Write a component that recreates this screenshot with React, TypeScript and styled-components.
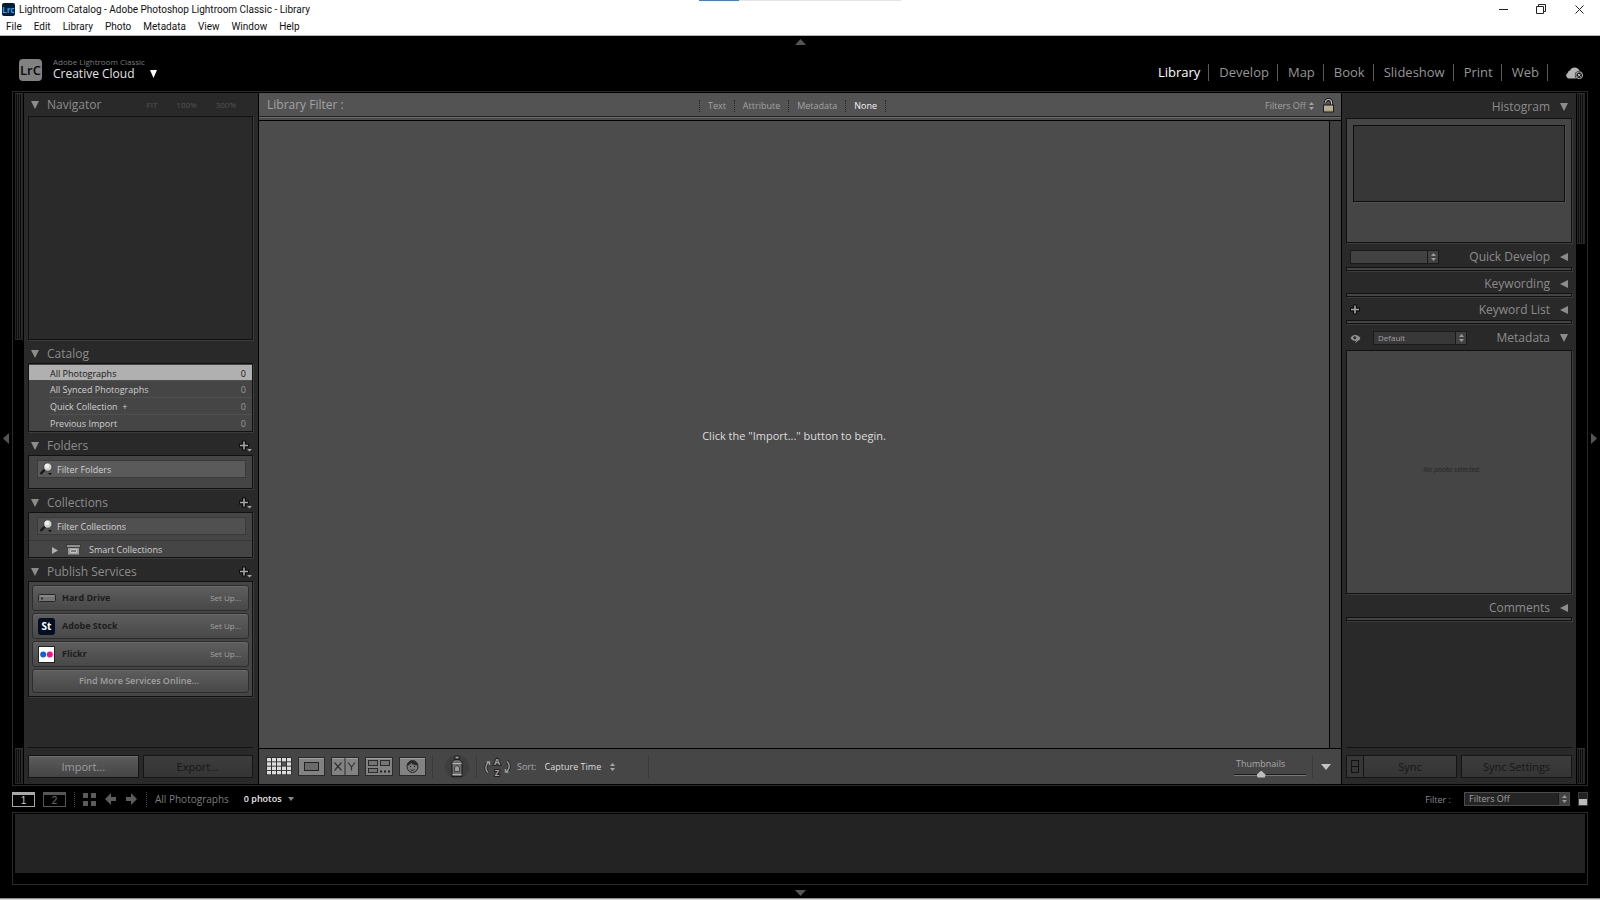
import React from 'react';
import styled, { createGlobalStyle, css } from 'styled-components';

const Global = createGlobalStyle`
  *, *::before, *::after { box-sizing: border-box; }
  body { margin: 0; background: #000; }
  body, button, input, select {
    font-family: "Open Sans", "Noto Sans", sans-serif;
    font-size: 9px;
  }
  button, input, select { margin: 0; padding: 0; border: 0; border-radius: 0; background: none; color: inherit; outline: none; }
  button { cursor: default; }
  svg { display: block; flex: none; }
  h1, h2, p { margin: 0; font-weight: 400; }
`;

const Shell = styled.div`
  display: flex;
  flex-direction: column;
  min-height: 100vh;
  background: #000;
`;

/* ---------- window chrome ---------- */

const Chrome = styled.header`
  position: relative;
  display: flex;
  flex-direction: column;
  height: 36px;
  background: #fff;
  color: #111;
  border-bottom: 1px solid #b4b4b4;
`;

const LoadBar = styled.div`
  position: absolute;
  top: 0;
  left: 50%;
  width: 202px;
  height: 1px;
  transform: translateX(-50%);
  background: linear-gradient(to right, #2b8ae0 40px, #e4e4e4 40px);
`;

const TitleRow = styled.div`
  display: flex;
  align-items: center;
  height: 18px;
  padding-left: 2px;
`;

const AppTitle = styled.h1`
  flex: 1;
  padding: 2px 0 0 4px;
  font-family: Roboto, sans-serif;
  font-size: 10px;
  line-height: 16px;
`;

const WindowButton = styled.button`
  display: grid;
  place-items: center;
  width: 38px;
  height: 18px;
`;

const WindowButtons = styled.div`
  display: flex;
  padding-right: 2px;
`;

const MenuBar = styled.nav`
  display: flex;
  gap: 12px;
  padding-left: 6px;
`;

const MenuItem = styled.button`
  font-family: Roboto, sans-serif;
  font-size: 10px;
  line-height: 18px;
`;

/* ---------- top strip ---------- */

const EdgeToggle = styled.button<{ $h?: number }>`
  display: grid;
  place-items: center;
  width: 100%;
  height: ${p => (p.$h ? p.$h + 'px' : '100%')};
  color: #555;
`;

const StripToggle = styled(EdgeToggle)`
  padding-top: 3px;
`;

const ModuleBar = styled.div`
  display: flex;
  justify-content: space-between;
  align-items: center;
  height: 43px;
  padding: 0 16px 0 19px;
`;

const Identity = styled.div`
  display: flex;
  align-items: center;
  gap: 10px;
  padding-top: 2px;
`;

const IdentityText = styled.div`
  display: flex;
  flex-direction: column;
  padding-bottom: 4px;
  color: #7a7a7a;
  font-size: 8px;
  line-height: 10px;
`;

const IdentityName = styled.button`
  display: flex;
  align-items: center;
  gap: 15px;
  color: #e4e4e4;
  font-size: 12px;
  line-height: 14px;
`;

const Modules = styled.nav`
  display: flex;
  align-items: center;
  padding-top: 6px;
`;

const Module = styled.a<{ $on?: boolean }>`
  padding: 0 8px 0 10px;
  border-right: 1px solid #5a5a5a;
  color: ${p => (p.$on ? '#fff' : '#969696')};
  font-size: 13px;
  line-height: 17px;
  text-decoration: none;
`;

const CloudButton = styled.button`
  padding-left: 17px;
`;

/* ---------- workspace ---------- */

const Workspace = styled.div`
  flex: 1;
  display: grid;
  grid-template-columns: 12px minmax(0, 1fr) 12px;
`;

const Frame = styled.div`
  display: grid;
  grid-template-columns: 10px 234px minmax(0, 1fr) 234px 10px;
  padding: 1px;
  border: 1px solid #292929;
`;

const ScrollTrack = styled.div`
  display: flex;
  flex-direction: column;
  justify-content: space-between;
  padding: 0 1px;
`;

const ScrollThumb = styled.div<{ $h: number }>`
  height: ${p => p.$h}px;
  border: 1px solid #262626;
  border-top-color: #333;
  background: repeating-linear-gradient(to right, #0c0c0c 0 1px, #2a2a2a 1px 2px);
`;

const Panel = styled.aside<{ $side: 'left' | 'right' }>`
  display: flex;
  flex-direction: column;
  padding: 0 ${p => (p.$side === 'left' ? 5 : 4)}px 0 4px;
  background: #292929;
  color: #8c8c8c;
`;

const PanelHead = styled.div<{ $h?: number; $right?: boolean; $top?: number }>`
  display: flex;
  align-items: center;
  flex-direction: ${p => (p.$right ? 'row-reverse' : 'row')};
  height: ${p => p.$h ?? 23}px;
  padding: ${p => p.$top ?? (p.$right ? 2 : 4)}px ${p => (p.$right ? 4 : 1)}px 0 ${p => (p.$right ? 4 : 3)}px;
`;

const PanelToggle = styled.button<{ $right?: boolean }>`
  display: flex;
  align-items: center;
  flex-direction: ${p => (p.$right ? 'row-reverse' : 'row')};
  gap: ${p => (p.$right ? 10 : 8)}px;
  color: #8c8c8c;
  font-size: 12px;
  line-height: 16px;
`;

const Spring = styled.span`
  flex: 1;
`;

const ZoomLevels = styled.div`
  display: flex;
  gap: 19px;
  margin-left: auto;
  padding-right: 16px;
  color: #545454;
`;

const ZoomLevel = styled.button`
  font-size: 8px;
  line-height: 12px;
`;

const Well = styled.div<{ $tone?: string }>`
  border: 1px solid #111;
  box-shadow: 1px 1px 0 #3c3c3c;
  background: ${p => p.$tone ?? '#454545'};
`;

const Preview = styled(Well)`
  height: 224px;
`;

const CatalogList = styled(Well)`
  padding-top: 1px;
`;

const CatalogRow = styled.button<{ $on?: boolean }>`
  display: flex;
  justify-content: space-between;
  align-items: center;
  width: 100%;
  height: 17px;
  padding: 2px 6px 0 21px;
  color: #cfcfcf;
  line-height: 15px;
  white-space: pre;
  background: linear-gradient(#505050, #505050) 20px 0 / 100% 1px no-repeat;
  ${p => p.$on && css`
    height: 15px;
    color: #161616;
    background: #b0b0b0;
  `}
`;

const Count = styled.span<{ $on?: boolean }>`
  color: ${p => (p.$on ? '#161616' : '#999')};
`;

const SearchWell = styled(Well)<{ $pad: number }>`
  padding: 4px 0 ${p => p.$pad}px;
`;

const SearchField = styled.label<{ $tone: string }>`
  display: flex;
  align-items: center;
  gap: 4px;
  height: 18px;
  margin: 0 6px 0 8px;
  padding-left: 1px;
  border: 1px solid #3a3a3a;
  background: ${p => p.$tone};
`;

const SearchInput = styled.input`
  flex: 1;
  min-width: 0;
  padding-top: 2px;
  line-height: 14px;
  color: #d0d0d0;
  &::placeholder { color: #d0d0d0; opacity: 1; }
`;

const TreeRow = styled.button`
  display: flex;
  align-items: center;
  width: 100%;
  height: 17px;
  margin-top: 5px;
  padding: 2px 0 0 23px;
  border-top: 1px solid #383838;
  color: #cfcfcf;
  line-height: 14px;
`;

const TreeLabel = styled.span`
  padding-left: 8px;
`;

const TreeIcon = styled.span`
  padding-left: 8px;
`;

const ServiceList = styled(Well)`
  display: flex;
  flex-direction: column;
  gap: 2px;
  padding: 3px;
`;

const Service = styled.button<{ $more?: boolean }>`
  display: flex;
  align-items: center;
  justify-content: ${p => (p.$more ? 'center' : 'flex-start')};
  height: ${p => (p.$more ? 24 : 26)}px;
  padding: 0 7px 0 4px;
  border: 1px solid #2c2c2c;
  border-radius: 3px;
  box-shadow: inset 0 1px 0 #6a6a6a;
  background: linear-gradient(#5e5e5e, #484848);
  color: #a0a0a0;
  font-weight: ${p => (p.$more ? 600 : 400)};
  line-height: 14px;
`;

const ServiceIcon = styled.span`
  display: grid;
  place-items: center;
  width: 19px;
  margin-right: 6px;
`;

const ServiceName = styled.strong`
  flex: 1;
  text-align: left;
  font-weight: 700;
  color: #1c1c1c;
`;

const SetUp = styled.span`
  font-size: 8px;
  color: #a4a4a4;
`;

const PanelFoot = styled.div`
  display: grid;
  grid-template-columns: 1fr 1fr;
  gap: 4px;
  height: 37px;
  margin-top: auto;
  padding: 7px 0;
  border-top: 1px solid #111;
`;

const FootButton = styled.button<{ $on?: boolean }>`
  flex: 1;
  height: 23px;
  border: 1px solid #141414;
  box-shadow: inset 0 1px 0 ${p => (p.$on ? '#6c6c6c' : '#3e3e3e')};
  background: ${p => (p.$on ? 'linear-gradient(#5c5c5c, #444)' : 'linear-gradient(#3c3c3c, #353535)')};
  color: ${p => (p.$on ? '#9c9c9c' : '#161616')};
  font-size: 11px;
  line-height: 20px;
`;

const SplitButton = styled.div`
  display: flex;
`;

const SyncSwitch = styled.button`
  display: grid;
  place-items: center;
  width: 17px;
  height: 23px;
  border: 1px solid #141414;
  border-right: 0;
  background: #373737;
`;

const HistogramWell = styled(Well)`
  height: 125px;
  padding: 6px;
`;

const HistogramBox = styled.div`
  height: 77px;
  border: 1px solid #0e0e0e;
  box-shadow: 1px 1px 0 #505050;
  background: #373737;
`;

const ClosedBar = styled(Well)`
  height: 4px;
`;

const MetadataWell = styled(Well)`
  display: flex;
  justify-content: center;
  height: 244px;
  padding: 112px 14px 0 0;
  color: #242424;
  font-size: 7px;
  font-style: italic;
  line-height: 14px;
`;

const Picker = styled.span<{ $w: number; $line?: string; $tone?: string }>`
  display: flex;
  align-items: stretch;
  width: ${p => p.$w}px;
  height: 14px;
  border: 1px solid ${p => p.$line ?? '#1a1a1a'};
  background: ${p => p.$tone ?? '#424242'};
`;

const PickerSelect = styled.select<{ $size?: number }>`
  appearance: none;
  flex: 1;
  min-width: 0;
  padding-left: 4px;
  color: #a0a0a0;
  font-size: ${p => p.$size ?? 9}px;
  line-height: 12px;
`;

const PickerArrows = styled.span`
  display: grid;
  place-items: center;
  width: 11px;
  border-left: 1px solid #1a1a1a;
  background: #424242;
  color: #9a9a9a;
  pointer-events: none;
`;

const HeadTool = styled.button<{ $gap?: number }>`
  margin-right: ${p => p.$gap ?? 0}px;
`;

/* ---------- centre ---------- */

const Centre = styled.main`
  display: flex;
  flex-direction: column;
  min-width: 0;
  border: solid #000;
  border-width: 0 1px;
`;

const FilterBar = styled.div`
  display: grid;
  grid-template-columns: 1fr auto 1fr;
  align-items: center;
  height: 24px;
  padding: 2px 7px 0 8px;
  background: #535353;
  border-bottom: 1px solid #242424;
  color: #a2a2a2;
`;

const FilterTitle = styled.h2`
  font-size: 12px;
  line-height: 16px;
  padding-bottom: 2px;
`;

const FilterTabs = styled.div`
  display: flex;
  margin-right: 16px;
  border-left: 1px dotted #262626;
`;

const FilterTab = styled.button<{ $on?: boolean }>`
  padding: 0 8px;
  border-right: 1px dotted #262626;
  color: ${p => (p.$on ? '#f4f4f4' : '#a2a2a2')};
  line-height: 12px;
`;

const FilterEnd = styled.div`
  display: flex;
  justify-content: flex-end;
  align-items: center;
  gap: 9px;
`;

const InlinePicker = styled.label`
  display: flex;
  align-items: center;
  gap: 3px;
`;

const InlineSelect = styled.select<{ $bright?: boolean }>`
  appearance: none;
  color: ${p => (p.$bright ? '#dcdcdc' : '#a2a2a2')};
  line-height: 14px;
`;

const FilterLip = styled.div`
  height: 4px;
  background: #4c4c4c;
  border-top: 1px solid #6a6a6a;
  border-bottom: 1px solid #000;
`;

const GridArea = styled.div`
  flex: 1;
  display: grid;
  grid-template-columns: minmax(0, 1fr) 12px;
`;

const GridCanvas = styled.div`
  display: grid;
  place-items: center;
  padding-top: 2px;
  background: #4c4c4c;
  color: #dcdcdc;
  font-size: 11px;
  line-height: 16px;
`;

const GridScroll = styled.div`
  border-left: 1px solid #000;
  background: #3f3f3f;
`;

const Toolbar = styled.div`
  display: flex;
  align-items: center;
  height: 36px;
  padding: 0 10px 0 7px;
  border-top: 1px solid #000;
  background: #464646;
  color: #a8a8a8;
`;

const ViewButtons = styled.div`
  display: flex;
  gap: 6px;
`;

const Rule = styled.i<{ $l: number; $r: number }>`
  width: 1px;
  height: 23px;
  margin: 0 ${p => p.$r}px 0 ${p => p.$l}px;
  background: #3a3a3a;
`;

const SortPicker = styled.label`
  display: flex;
  align-items: center;
  gap: 8px;
  padding-left: 6px;
`;

const ThumbSize = styled.label`
  display: flex;
  flex-direction: column;
  width: 72px;
  padding-top: 3px;
  line-height: 12px;
`;

const ThumbLabel = styled.span`
  padding-left: 2px;
`;

const Slider = styled.input`
  appearance: none;
  width: 72px;
  height: 9px;
  background: linear-gradient(#1c1c1c, #1c1c1c) 0 4px / 100% 1px no-repeat, linear-gradient(#777, #777) 0 5px / 100% 1px no-repeat;
  &::-webkit-slider-thumb {
    appearance: none;
    width: 9px;
    height: 7px;
    background: #bdbdbd;
    clip-path: polygon(50% 0, 100% 60%, 90% 100%, 10% 100%, 0 60%);
  }
`;

/* ---------- filmstrip ---------- */

const StripBar = styled.div`
  display: flex;
  align-items: center;
  height: 26px;
  padding: 0 12px;
  color: #8a8a8a;
`;

const MonitorButton = styled.button<{ $on?: boolean }>`
  width: 23px;
  height: 15px;
  margin-right: 8px;
  border: 1px solid ${p => (p.$on ? '#a8a8a8' : '#565656')};
  border-top-width: 3px;
  color: ${p => (p.$on ? '#c8c8c8' : '#707070')};
  font-family: "Liberation Sans", sans-serif;
  font-size: 10px;
  line-height: 11px;
`;

const Dots = styled.i<{ $r: number }>`
  height: 15px;
  margin-right: ${p => p.$r}px;
  border-left: 1px dotted #4a4a4a;
`;

const StripButton = styled.button<{ $r: number }>`
  margin-right: ${p => p.$r}px;
`;

const Source = styled.button<{ $on?: boolean }>`
  display: flex;
  align-items: center;
  gap: 6px;
  margin-right: 15px;
  color: ${p => (p.$on ? '#e8e8e8' : '#7c7c7c')};
  font-size: ${p => (p.$on ? 9 : 10)}px;
  font-weight: ${p => (p.$on ? 600 : 400)};
  line-height: 14px;
`;

const StripFilter = styled.label`
  display: flex;
  align-items: center;
  gap: 13px;
  margin: 0 8px 0 auto;
`;

const StripSwitch = styled.button`
  width: 10px;
  height: 14px;
  border: 1px solid #3a3a3a;
  background: linear-gradient(#222 50%, #bbb 50%);
`;

const Filmstrip = styled.div`
  height: 73px;
  margin: 0 12px;
  padding: 1px 2px 11px;
  border: 1px solid #292929;
`;

const FilmTray = styled.div`
  height: 100%;
  background: #232323;
`;

const Desktop = styled.div`
  height: 2px;
  background: #d8d8d8;
  border-top: 1px solid #8c8c8c;
`;

/* ---------- icons ---------- */

const Tri = ({ d, w = 8, h = 8, fill = 'currentColor' }: { d: 'up' | 'down' | 'left' | 'right'; w?: number; h?: number; fill?: string }) => {
  const pts = {
    up: `0,${h} ${w},${h} ${w / 2},0`,
    down: `0,0 ${w},0 ${w / 2},${h}`,
    left: `${w},0 ${w},${h} 0,${h / 2}`,
    right: `0,0 0,${h} ${w},${h / 2}`,
  }[d];
  return <svg width={w} height={h} aria-hidden="true"><polygon points={pts} fill={fill} /></svg>;
};

const UpDown = ({ fill = 'currentColor' }: { fill?: string }) => (
  <svg width="5" height="8" aria-hidden="true"><path d="M0 3L2.5 0L5 3ZM0 5L2.5 8L5 5Z" fill={fill} /></svg>
);

const LogoText = styled.text`
  font-family: "Open Sans", sans-serif;
`;

const AppIcon = () => (
  <svg width="13" height="13" aria-hidden="true">
    <rect width="13" height="13" rx="2" fill="#001d34" />
    <LogoText x="6.5" y="9.5" fontSize="8" fontWeight="700" fill="#31a8ff" textAnchor="middle">Lrc</LogoText>
  </svg>
);

const Badge = () => (
  <svg width="24" height="23" aria-hidden="true">
    <rect width="23" height="22" rx="4" fill="#818181" />
    <LogoText x="11.5" y="15.5" fontSize="13" fontWeight="600" fill="#0c0c0c" textAnchor="middle">LrC</LogoText>
  </svg>
);

const CloudIcon = () => (
  <svg width="19" height="14" aria-hidden="true">
    <path d="M3.5 12.5A3 3 0 0 1 2.6 7A3 3 0 0 1 5 4.6A5 5 0 0 1 14.4 4.8A3.5 3.5 0 0 1 17 9V12.5Z" fill="#b4b4b4" />
    <circle cx="14.2" cy="9.2" r="4.3" fill="#000" />
    <circle cx="14.2" cy="9.2" r="3.4" fill="#222" stroke="#b4b4b4" />
    <path d="M12.8 7.8L15.6 10.6M15.6 7.8L12.8 10.6" stroke="#c8c8c8" />
  </svg>
);

const PlusIcon = ({ menu }: { menu?: boolean }) => (
  <svg width="13" height="12" aria-hidden="true">
    <path d="M0 5.5H10M5 .5V10.5" stroke="#0d0d0d" strokeWidth="4" />
    <path d="M1 5.5H9M5 1.5V9.5" stroke="#a6a6a6" strokeWidth="1.6" />
    {menu && <path d="M8 9H13L10.5 11.5Z" fill="#a6a6a6" />}
  </svg>
);

const Magnifier = () => (
  <svg width="14" height="14" aria-hidden="true">
    <path d="M1.5 12L6 7.2" stroke="#171717" strokeWidth="2.4" />
    <circle cx="8.8" cy="5" r="4.2" fill="#cfcfcf" stroke="#303030" strokeWidth=".8" />
    <circle cx="8" cy="4" r="2.2" fill="#efefef" />
    <path d="M9 11H13L11 13.5Z" fill="#171717" />
  </svg>
);

const SmartSet = () => (
  <svg width="15" height="12" aria-hidden="true">
    <path d="M.5 .5H14.5V3.5H.5Z" fill="#8e8e8e" stroke="#2c2c2c" strokeWidth=".8" />
    <path d="M1.5 3.5H13.5V11H1.5Z" fill="#9a9a9a" stroke="#3a3a3a" strokeWidth=".8" />
    <path d="M4.5 5.5H10.5V8.5H4.5Z" fill="#777" stroke="#c4c4c4" />
  </svg>
);

const DriveIcon = () => (
  <svg width="18" height="8" aria-hidden="true">
    <rect x=".5" y=".5" width="17" height="7" rx="1" fill="#747474" stroke="#262626" />
    <path d="M2 2H16" stroke="#999" />
    <rect x="3" y="3.5" width="2" height="2" fill="#303030" />
  </svg>
);

const StockIcon = () => (
  <svg width="17" height="17" aria-hidden="true">
    <rect width="17" height="17" rx="3" fill="#020f22" />
    <LogoText x="8.5" y="12" fontSize="10" fontWeight="700" fill="#fff" textAnchor="middle">St</LogoText>
  </svg>
);

const FlickrIcon = () => (
  <svg width="17" height="17" aria-hidden="true">
    <rect width="16" height="16" x=".5" y=".5" fill="#fff" stroke="#222" />
    <circle cx="5.2" cy="8.5" r="3" fill="#0a63dc" />
    <circle cx="11.8" cy="8.5" r="3" fill="#ff0a84" />
  </svg>
);

const EyeIcon = () => (
  <svg width="11" height="10" aria-hidden="true">
    <path d="M.5 5C2.5 1 8 1 10.5 5C8 9 2.5 9 .5 5Z" fill="#8a8a8a" />
    <circle cx="4.8" cy="4.8" r="2.1" fill="#333" stroke="#aaa" strokeWidth=".8" />
    <path d="M5.5 9.5L10 5.5" stroke="#aaa" />
  </svg>
);

const LockIcon = () => (
  <svg width="11" height="15" aria-hidden="true">
    <path d="M2.5 4.5A3 3 0 0 1 8.5 4.5V7" fill="none" stroke="#161616" strokeWidth="3" />
    <path d="M2.5 4.5A3 3 0 0 1 8.5 4.5V7" fill="none" stroke="#c2c2c2" strokeWidth="1.2" />
    <rect x=".5" y="7" width="10" height="7" fill="#aaa181" stroke="#1c1c1c" />
    <path d="M1 9H10M1 11H10" stroke="#c6bfa2" />
  </svg>
);

const GridIcon = () => (
  <svg width="26" height="19" aria-hidden="true">
    <rect width="26" height="18" fill="#303030" />
    {[0, 1, 2, 3].map(r => [0, 1, 2, 3, 4].map(c => (
      <rect key={`${r}${c}`} x={1 + c * 5} y={1 + r * 4.3} width="4" height="3.4" fill={r === 1 && c === 3 ? '#555' : '#dcdcdc'} />
    )))}
  </svg>
);

const Plate = ({ children, w = 27 }: { children: React.ReactNode; w?: number }) => (
  <svg width={w} height="19" aria-hidden="true">
    <rect x=".5" y=".5" width={w - 1} height="18" fill="#828282" stroke="#2b2b2b" />
    <path d={`M1 1.5H${w - 1}`} stroke="#a0a0a0" />
    {children}
  </svg>
);

const SprayIcon = () => (
  <svg width="24" height="24" aria-hidden="true">
    <circle cx="12" cy="12" r="12" fill="#3e3e3e" />
    <path d="M10 1H14V4H10Z" fill="#a2a2a2" stroke="#1a1a1a" />
    <path d="M7 8C7 5.5 9 4.5 12 4.5S17 5.5 17 8V21.5H7Z" fill="#6c6c6c" stroke="#1a1a1a" />
    <path d="M7.500 8.500H16.500M7.500 19.500H16.500" stroke="#b4b4b4" />
    <path d="M9.500 12.500L12 10.500L14.500 12.500V16.500H9.500Z" fill="#9c9c9c" stroke="#333" strokeWidth=".8" />
  </svg>
);

const SortIcon = () => (
  <svg width="27" height="26" aria-hidden="true">
    <g fill="none" stroke="#222" strokeWidth="3"><path d="M4 18.500C1 16 1 11 4.500 8.500" /><path d="M23 7.500C26 10 26 15 22.500 17.500" /></g>
    <g fill="none" stroke="#9c9c9c" strokeWidth="1.4"><path d="M4 18.500C1 16 1 11 4.500 8.500M2.500 8H5.500V11" /><path d="M23 7.500C26 10 26 15 22.500 17.500M24.500 18H21.500V15" /></g>
    <LogoText x="13" y="11" fontSize="9" fontWeight="700" fill="#a2a2a2" stroke="#222" strokeWidth="2" paintOrder="stroke" textAnchor="middle">A</LogoText>
    <LogoText x="13" y="22" fontSize="8" fontWeight="700" fill="#a2a2a2" stroke="#222" strokeWidth="2" paintOrder="stroke" textAnchor="middle">Z</LogoText>
  </svg>
);

const ArrowIcon = ({ back }: { back?: boolean }) => (
  <svg width="11" height="12" aria-hidden="true">
    <path d={back ? 'M0 6L6 0V4H11V8H6V12Z' : 'M11 6L5 0V4H0V8H5V12Z'} fill="#5c5c5c" />
  </svg>
);

/* ---------- pieces ---------- */

type HeadProps = { title: string; open?: boolean; right?: boolean; h?: number; top?: number; children?: React.ReactNode };

const Head = ({ title, open = true, right, h, top, children }: HeadProps) => (
  <PanelHead $right={right} $h={h} $top={top}>
    <PanelToggle $right={right} aria-expanded={open}>
      {open ? <Tri d="down" /> : <Tri d="left" />}
      {title}
    </PanelToggle>
    {children && <><Spring />{children}</>}
  </PanelHead>
);

const catalog = ['All Photographs', 'All Synced Photographs', 'Quick Collection  +', 'Previous Import'];
const services = [
  { name: 'Hard Drive', icon: <DriveIcon /> },
  { name: 'Adobe Stock', icon: <StockIcon /> },
  { name: 'Flickr', icon: <FlickrIcon /> },
];

const LeftPanel = () => (
  <Panel $side="left" aria-label="Library sources">
    <Head title="Navigator" top={1}>
      <ZoomLevels>
        {['FIT', '100%', '300%'].map(z => <ZoomLevel key={z}>{z}</ZoomLevel>)}
      </ZoomLevels>
    </Head>
    <Preview $tone="#2a2a2a" />
    <Head title="Catalog" />
    <CatalogList>
      {catalog.map((c, i) => (
        <CatalogRow key={c} $on={i === 0}><span>{c}</span><Count $on={i === 0}>0</Count></CatalogRow>
      ))}
    </CatalogList>
    <Head title="Folders"><HeadTool aria-label="Add folder"><PlusIcon menu /></HeadTool></Head>
    <SearchWell $pad={10}>
      <SearchField $tone="#5a5a5a"><Magnifier /><SearchInput aria-label="Filter Folders" placeholder="Filter Folders" /></SearchField>
    </SearchWell>
    <Head title="Collections"><HeadTool aria-label="Add collection"><PlusIcon menu /></HeadTool></Head>
    <SearchWell $pad={0}>
      <SearchField $tone="#505050"><Magnifier /><SearchInput aria-label="Filter Collections" placeholder="Filter Collections" /></SearchField>
      <TreeRow><Tri d="right" w={6} h={7} fill="#b0b0b0" /><TreeIcon><SmartSet /></TreeIcon><TreeLabel>Smart Collections</TreeLabel></TreeRow>
    </SearchWell>
    <Head title="Publish Services"><HeadTool aria-label="Add service"><PlusIcon menu /></HeadTool></Head>
    <ServiceList>
      {services.map(s => (
        <Service key={s.name}><ServiceIcon>{s.icon}</ServiceIcon><ServiceName>{s.name}</ServiceName><SetUp>Set Up...</SetUp></Service>
      ))}
      <Service $more>Find More Services Online...</Service>
    </ServiceList>
    <PanelFoot>
      <FootButton $on>Import...</FootButton>
      <FootButton>Export...</FootButton>
    </PanelFoot>
  </Panel>
);

const RightPanel = () => (
  <Panel $side="right" aria-label="Photo information">
    <Head right title="Histogram" h={25} />
    <HistogramWell><HistogramBox /></HistogramWell>
    <Head right title="Quick Develop" h={24} top={3} open={false}>
      <Picker $w={89}><PickerSelect aria-label="Saved preset"><option></option></PickerSelect><PickerArrows><UpDown /></PickerArrows></Picker>
    </Head>
    <ClosedBar />
    <Head right title="Keywording" h={22} top={3} open={false} />
    <ClosedBar />
    <Head right title="Keyword List" open={false}><HeadTool aria-label="Add keyword"><PlusIcon /></HeadTool></Head>
    <ClosedBar />
    <Head right title="Metadata" h={26}>
      <Picker $w={94} $tone="#383838"><PickerSelect $size={8} aria-label="Metadata set"><option>Default</option></PickerSelect><PickerArrows><UpDown /></PickerArrows></Picker>
      <HeadTool $gap={12} aria-label="Show fields"><EyeIcon /></HeadTool>
    </Head>
    <MetadataWell>No photo selected.</MetadataWell>
    <Head right title="Comments" open={false} top={4} />
    <ClosedBar />
    <PanelFoot>
      <SplitButton>
        <SyncSwitch aria-label="Auto sync"><svg width="8" height="13" aria-hidden="true"><path d="M.5 .5H7.5V12.5H.5ZM.5 6.5H7.5" fill="none" stroke="#111" /></svg></SyncSwitch>
        <FootButton>Sync</FootButton>
      </SplitButton>
      <FootButton>Sync Settings</FootButton>
    </PanelFoot>
  </Panel>
);

const CentrePane = () => (
  <Centre>
    <FilterBar>
      <FilterTitle>Library Filter :</FilterTitle>
      <FilterTabs>
        {['Text', 'Attribute', 'Metadata', 'None'].map(t => <FilterTab key={t} $on={t === 'None'}>{t}</FilterTab>)}
      </FilterTabs>
      <FilterEnd>
        <InlinePicker><InlineSelect aria-label="Filter preset"><option>Filters Off</option></InlineSelect><UpDown /></InlinePicker>
        <button aria-label="Lock filters"><LockIcon /></button>
      </FilterEnd>
    </FilterBar>
    <FilterLip />
    <GridArea>
      <GridCanvas><p>Click the "Import..." button to begin.</p></GridCanvas>
      <GridScroll />
    </GridArea>
    <Toolbar>
      <ViewButtons>
        <button aria-label="Grid"><GridIcon /></button>
        <button aria-label="Loupe"><Plate><rect x="6.5" y="5.5" width="14" height="8" fill="#6a6a6a" stroke="#222" /></Plate></button>
        <button aria-label="Compare"><Plate w={28}><path d="M14 1V18" stroke="#2b2b2b" /><path d="M3.5 5.5L10.5 13.5M10.5 5.5L3.5 13.5M17 5.5L20.5 10V13.5M24 5.5L20.5 10" fill="none" stroke="#333" strokeWidth="1.2" /></Plate></button>
        <button aria-label="Survey"><Plate w={28}><g fill="#747474" stroke="#2a2a2a"><rect x="3.5" y="3.5" width="9" height="5" /><rect x="15.5" y="3.5" width="9" height="5" /><rect x="3.5" y="11.5" width="9" height="4" /></g><path d="M15 14.5H25" stroke="#222" strokeWidth="2" strokeDasharray="2 2" /></Plate></button>
        <button aria-label="People"><Plate><ellipse cx="13.5" cy="9.5" rx="5.5" ry="6" fill="#7a7a7a" stroke="#222" /><path d="M8 8.5C8 2 19 2 19 8.5C16 8.5 13 7.5 12 6C11 8 10 8.5 8 8.5Z" fill="#2b2b2b" /><path d="M11 9.5H12M15 9.5H16M11.500 12.500C12.500 13.500 14.500 13.500 15.500 12.500" fill="none" stroke="#222" /></Plate></button>
      </ViewButtons>
      <Rule $l={6} $r={12} />
      <button aria-label="Painter"><SprayIcon /></button>
      <Rule $l={7} $r={7} />
      <button aria-label="Sort direction"><SortIcon /></button>
      <SortPicker>Sort: <InlineSelect $bright><option>Capture Time</option></InlineSelect><UpDown /></SortPicker>
      <Rule $l={33} $r={0} />
      <Spring />
      <ThumbSize><ThumbLabel>Thumbnails</ThumbLabel><Slider type="range" min={0} max={100} defaultValue={36} /></ThumbSize>
      <Rule $l={6} $r={8} />
      <button aria-label="Toolbar content"><Tri d="down" w={10} h={6} fill="#c4c4c4" /></button>
    </Toolbar>
  </Centre>
);

export default function App() {
  return (
    <Shell>
      <Global />
      <Chrome>
        <LoadBar />
        <TitleRow>
          <AppIcon />
          <AppTitle>Lightroom Catalog - Adobe Photoshop Lightroom Classic - Library</AppTitle>
          <WindowButtons>
            <WindowButton aria-label="Minimize"><svg width="9" height="9"><path d="M0 4.5H9" stroke="#222" /></svg></WindowButton>
            <WindowButton aria-label="Restore"><svg width="10" height="10"><path d="M.5 2.5H7.5V9.5H.5ZM2.5 2.5V.5H9.5V7.5H7.5" fill="none" stroke="#222" /></svg></WindowButton>
            <WindowButton aria-label="Close"><svg width="9" height="9"><path d="M.5 .5L8.5 8.5M8.5 .5L.5 8.5" stroke="#222" /></svg></WindowButton>
          </WindowButtons>
        </TitleRow>
        <MenuBar>
          {['File', 'Edit', 'Library', 'Photo', 'Metadata', 'View', 'Window', 'Help'].map(m => <MenuItem key={m}>{m}</MenuItem>)}
        </MenuBar>
      </Chrome>

      <EdgeToggle $h={12} aria-label="Hide module picker"><Tri d="up" w={11} h={6} /></EdgeToggle>

      <ModuleBar>
        <Identity>
          <Badge />
          <IdentityText>
            Adobe Lightroom Classic
            <IdentityName>Creative Cloud <Tri d="down" w={7} h={8} fill="#fff" /></IdentityName>
          </IdentityText>
        </Identity>
        <Modules>
          {['Library', 'Develop', 'Map', 'Book', 'Slideshow', 'Print', 'Web'].map(m => (
            <Module key={m} href={`#${m.toLowerCase()}`} $on={m === 'Library'}>{m}</Module>
          ))}
          <CloudButton aria-label="Sync status"><CloudIcon /></CloudButton>
        </Modules>
      </ModuleBar>

      <Workspace>
        <EdgeToggle aria-label="Hide left panel"><Tri d="left" w={6} h={11} /></EdgeToggle>
        <Frame>
          <ScrollTrack><ScrollThumb $h={247} /><ScrollThumb $h={36} /></ScrollTrack>
          <LeftPanel />
          <CentrePane />
          <RightPanel />
          <ScrollTrack><ScrollThumb $h={151} /><ScrollThumb $h={36} /></ScrollTrack>
        </Frame>
        <EdgeToggle aria-label="Hide right panel"><Tri d="right" w={6} h={11} /></EdgeToggle>
      </Workspace>

      <StripBar>
        <MonitorButton $on>1</MonitorButton>
        <MonitorButton>2</MonitorButton>
        <Dots $r={8} />
        <StripButton $r={9} aria-label="Grid view"><svg width="13" height="13"><path d="M0 0H5V5H0ZM8 0H13V5H8ZM0 8H5V13H0ZM8 8H13V13H8Z" fill="#5c5c5c" /></svg></StripButton>
        <StripButton $r={10} aria-label="Back"><ArrowIcon back /></StripButton>
        <StripButton $r={9} aria-label="Forward"><ArrowIcon /></StripButton>
        <Dots $r={8} />
        <Source>All Photographs</Source>
        <Source $on>0 photos <Tri d="down" w={6} h={4} fill="#8a8a8a" /></Source>
        <StripFilter>
          Filter :
          <Picker $w={106} $line="#4c4c4c" $tone="#242424"><PickerSelect><option>Filters Off</option></PickerSelect><PickerArrows><UpDown /></PickerArrows></Picker>
        </StripFilter>
        <StripSwitch aria-label="Toggle filters" />
      </StripBar>

      <Filmstrip><FilmTray /></Filmstrip>
      <StripToggle $h={13} aria-label="Hide filmstrip"><Tri d="down" w={11} h={6} /></StripToggle>
      <Desktop />
    </Shell>
  );
}
